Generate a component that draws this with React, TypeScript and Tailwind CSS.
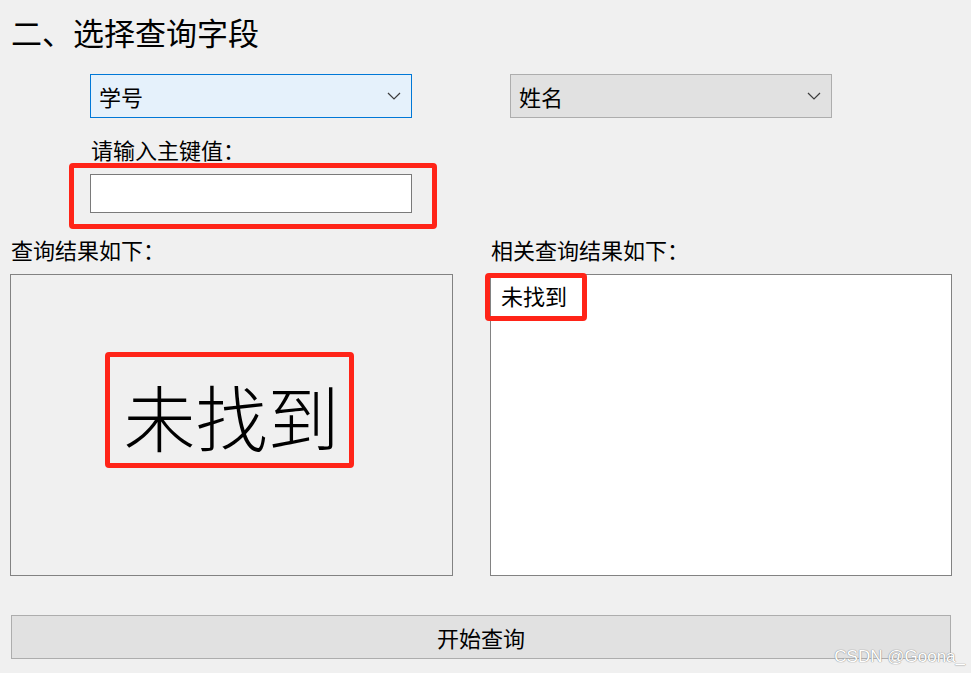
const font = { fontFamily: '"Noto Sans CJK SC", "Noto Sans", sans-serif' };

function Chevron() {
	return (
		<svg width="14" height="8" viewBox="0 0 14 8" fill="none" stroke="#3c3c3c" strokeWidth="1.2">
			<path d="M1 1L7 7L13 1" />
		</svg>
	);
}

function Combo({ label, active }: { label: string; active?: boolean }) {
	return (
		<div
			className={
				"w-[322px] h-[44px] border flex items-center justify-between pl-[8px] pr-[10px] text-[22px] leading-[22px] text-black " +
				(active ? "bg-[#e5f1fb] border-[#0078d7]" : "bg-[#e1e1e1] border-[#adadad]")
			}
		>
			<span>{label}</span>
			<Chevron />
		</div>
	);
}

export default function App() {
	return (
		<div className="w-[971px] h-[673px] bg-[#f0f0f0] relative overflow-hidden text-black" style={font}>
			<h1 className="ml-[11px] mt-[16px] text-[31px] leading-[32px] font-normal">二、选择查询字段</h1>

			<div className="mt-[26px] ml-[90px] flex gap-[98px]">
				<Combo label="学号" active />
				<Combo label="姓名" />
			</div>

			<div className="mt-[20px] ml-[91px] text-[22px] leading-[22px]">请输入主键值：</div>

			<div className="mt-[14px] ml-[90px] relative w-[322px] h-[39px]">
				<input className="w-full h-full bg-white border border-[#7a7a7a] outline-none px-2 text-[20px]" />
				<div className="absolute left-[-21px] top-[-11px] w-[368px] h-[66px] border-[5px] border-[#ff2418] rounded-[4px] pointer-events-none" />
			</div>

			<div className="mt-[25px] flex text-[22px] leading-[22px]">
				<div className="ml-[11px] w-[480px]">查询结果如下：</div>
				<div>相关查询结果如下：</div>
			</div>

			<div className="mt-[14px] ml-[10px] flex gap-[37px]">
				<div className="w-[443px] h-[302px] border border-[#828282] bg-[#f0f0f0] flex items-center justify-center pb-[30px] pr-[4px]">
					<div className="border-[5px] border-[#ff2418] rounded-[4px] pl-[13px] pr-[9px] pt-[22px] pb-[12px]">
						<div className="text-[72px] leading-[72px] font-light">未找到</div>
					</div>
				</div>
				<div className="w-[462px] h-[302px] border border-[#828282] bg-white relative">
					<div className="pl-[10px] pt-[9px] text-[22px] leading-[22px]">未找到</div>
					<div className="absolute left-[-6px] top-[-2px] w-[102px] h-[48px] border-[5px] border-[#ff2418] rounded-[4px]" />
				</div>
			</div>

			<button className="mt-[39px] ml-[11px] w-[940px] h-[44px] bg-[#e1e1e1] border border-[#adadad] flex items-center justify-center text-[22px] leading-[22px]">
				开始查询
			</button>

			<div
				className="absolute right-[6px] bottom-[6px] text-[17px] leading-[20px] text-white [text-shadow:0_0_1px_#8a8a8a,0_0_1px_#8a8a8a]"
				style={{ fontFamily: '"Liberation Sans", Arial, sans-serif' }}
			>
				CSDN @Goona_
			</div>
		</div>
	);
}
